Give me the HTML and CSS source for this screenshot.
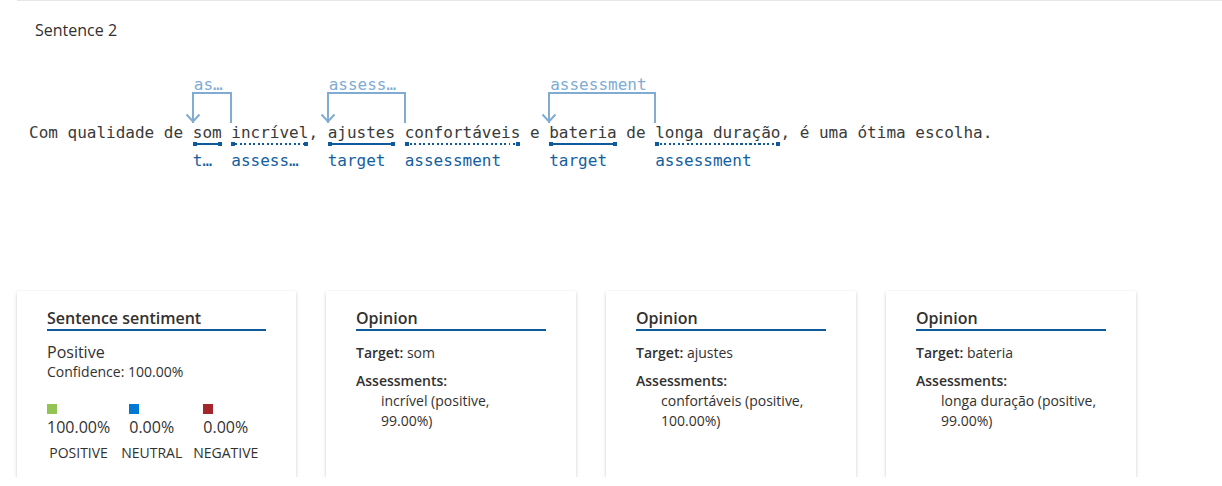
FILE: index.html
```html
<!DOCTYPE html>
<html lang="pt">
<head>
<meta charset="utf-8">
<title>Sentence 2</title>
<link rel="stylesheet" href="styles.css">
</head>
<body>
<div class="page">
  <section class="sentence-block">
    <div class="sentence-title">Sentence 2</div>
    <div class="sentence">Com qualidade de <span class="tok"><span class="arc" style="--w:4"><span class="arc-label">as…</span><svg class="arrow" viewBox="0 0 16 10" width="16" height="10"><polyline points="1.5,1.5 8,8.5 14.5,1.5"/></svg></span>som<span class="ul solid"></span><span class="tag">t…</span></span> <span class="tok">incrível<span class="ul dotted"></span><span class="tag">assess…</span></span>, <span class="tok"><span class="arc" style="--w:8"><span class="arc-label">assess…</span><svg class="arrow" viewBox="0 0 16 10" width="16" height="10"><polyline points="1.5,1.5 8,8.5 14.5,1.5"/></svg></span>ajustes<span class="ul solid"></span><span class="tag">target</span></span> <span class="tok">confortáveis<span class="ul dotted"></span><span class="tag">assessment</span></span> e <span class="tok"><span class="arc" style="--w:11"><span class="arc-label">assessment</span><svg class="arrow" viewBox="0 0 16 10" width="16" height="10"><polyline points="1.5,1.5 8,8.5 14.5,1.5"/></svg></span>bateria<span class="ul solid"></span><span class="tag">target</span></span> de <span class="tok">longa duração<span class="ul dotted"></span><span class="tag">assessment</span></span>, é uma ótima escolha.</div>
  </section>

  <section class="cards">
    <div class="card card-wide">
      <div class="card-title">Sentence sentiment</div>
      <div class="overall">Positive</div>
      <div class="confidence">Confidence: 100.00%</div>
      <div class="scores">
        <div class="score">
          <div class="score-main"><span class="swatch pos"></span><span class="score-value">100.00%</span></div>
          <div class="score-label">POSITIVE</div>
        </div>
        <div class="score">
          <div class="score-main"><span class="swatch neu"></span><span class="score-value">0.00%</span></div>
          <div class="score-label">NEUTRAL</div>
        </div>
        <div class="score">
          <div class="score-main"><span class="swatch neg"></span><span class="score-value">0.00%</span></div>
          <div class="score-label">NEGATIVE</div>
        </div>
      </div>
    </div>

    <div class="card">
      <div class="card-title">Opinion</div>
      <div class="op-target"><b>Target:</b> som</div>
      <div class="op-head"><b>Assessments:</b></div>
      <div class="op-item">incrível (positive, 99.00%)</div>
    </div>

    <div class="card">
      <div class="card-title">Opinion</div>
      <div class="op-target"><b>Target:</b> ajustes</div>
      <div class="op-head"><b>Assessments:</b></div>
      <div class="op-item">confortáveis (positive, 100.00%)</div>
    </div>

    <div class="card">
      <div class="card-title">Opinion</div>
      <div class="op-target"><b>Target:</b> bateria</div>
      <div class="op-head"><b>Assessments:</b></div>
      <div class="op-item">longa duração (positive, 99.00%)</div>
    </div>
  </section>
</div>
</body>
</html>
```
FILE: styles.css
```css
html, body {
  margin: 0;
  padding: 0;
  background: #ffffff;
}

body {
  font-family: "Open Sans", "Noto Sans", sans-serif;
  color: #323130;
}

.page {
  margin-left: 17px;
  border-top: 1px solid #e6e6e6;
}

.sentence-block {
  padding-left: 12px;
}

.sentence-title {
  margin-top: 19px;
  padding-left: 6px;
  font-size: 16px;
  line-height: 20px;
  color: #323130;
}

.sentence {
  margin-top: 83px;
  font-family: "DejaVu Sans Mono", "Liberation Mono", monospace;
  font-size: 16px;
  line-height: 20px;
  white-space: pre;
  color: #3a3a3a;
  height: 20px;
}

.tok {
  position: relative;
  display: inline-block;
}

.ul {
  position: absolute;
  left: 0;
  right: 0;
  top: 20px;
  height: 2px;
}

.ul.solid {
  background: #0f5a9c;
}

.ul.dotted {
  background: repeating-linear-gradient(to right, #0f5a9c 0 2px, transparent 2px 4.5px);
}

.ul::before,
.ul::after {
  content: "";
  position: absolute;
  top: -1px;
  width: 4px;
  height: 4px;
  background: #0f5a9c;
}

.ul::before { left: 0; }
.ul::after { right: 0; }

.tag {
  position: absolute;
  left: 0;
  top: 28px;
  color: #14609f;
}

.arc {
  position: absolute;
  left: -1px;
  top: -31px;
  width: calc(var(--w) * 1ch + 2px);
  height: 31px;
  box-sizing: border-box;
  border: 2px solid #80acd4;
  border-bottom: none;
}

.arc-label {
  position: absolute;
  left: 0;
  top: -19px;
  color: #80acd4;
  line-height: 20px;
}

.arrow {
  position: absolute;
  left: -9px;
  bottom: 0;
  overflow: visible;
}

.arrow polyline {
  fill: none;
  stroke: #80acd4;
  stroke-width: 2;
}

.cards {
  display: flex;
  gap: 30px;
  margin-top: 148px;
  align-items: flex-start;
}

.card {
  width: 250px;
  height: 186px;
  box-sizing: border-box;
  padding: 17px 30px 0;
  background: #fff;
  box-shadow: 0 1.6px 4px rgba(0, 0, 0, 0.16), 0 0 1.5px rgba(0, 0, 0, 0.08);
}

.card-wide {
  width: 279px;
}

.card-title {
  font-size: 16px;
  font-weight: 600;
  line-height: 20px;
  padding-bottom: 1px;
  border-bottom: 2px solid #0f5a9c;
  color: #323130;
}

.overall {
  margin-top: 11px;
  font-size: 16px;
  line-height: 20px;
}

.confidence {
  font-size: 14px;
  line-height: 20px;
}

.scores {
  display: flex;
  gap: 11px;
  margin-top: 22px;
}

.score {
  display: flex;
  flex-direction: column;
  align-items: center;
}

.score-main {
  display: flex;
  flex-direction: column;
  align-items: flex-start;
}

.swatch {
  width: 10px;
  height: 10px;
}

.swatch.pos { background: #92c353; }
.swatch.neu { background: #0078d4; }
.swatch.neg { background: #a4262c; }

.score-value {
  margin-top: 3px;
  font-size: 16px;
  line-height: 20px;
}

.score-label {
  margin-top: 7px;
  font-size: 14px;
  line-height: 18px;
}

.op-target {
  margin-top: 12px;
  font-size: 14px;
  line-height: 20px;
}

.op-head {
  margin-top: 8px;
  font-size: 14px;
  line-height: 20px;
}

.op-target b,
.op-head b {
  font-weight: 600;
}

.op-item {
  width: 162px;
  padding-left: 25px;
  font-size: 14px;
  line-height: 20px;
}
```
